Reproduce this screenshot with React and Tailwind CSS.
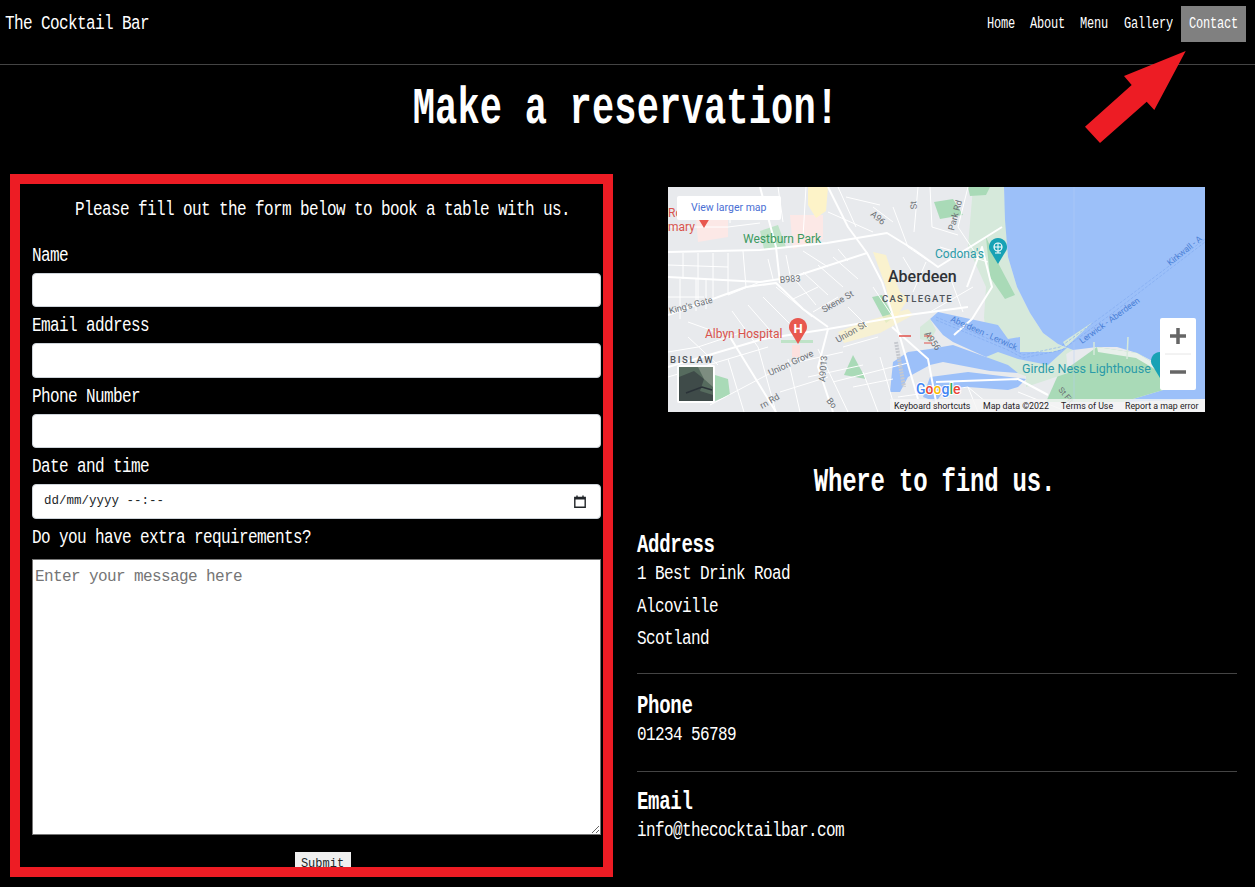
const minorRoads = [
  "M0 40L60 40L92 36", "M30 66L30 118", "M45 66L45 112", "M60 66L60 108", "M75 64L78 100", "M15 66L15 92",
  "M12 92L12 132", "M28 92L28 124", "M38 92L38 122", "M0 110L36 110", "M60 108L92 95", "M64 124L90 160", "M80 118L108 150",
  "M95 110L130 145", "M108 100L144 130", "M125 90L148 118", "M135 85L160 108", "M150 78L175 100", "M165 70L190 92",
  "M0 165L30 160L75 145", "M0 190L60 172L100 160", "M60 172L76 225", "M42 218L95 190L135 170", "M90 160L108 225", "M120 172L132 225",
  "M150 162L180 225", "M175 160L210 150", "M165 195L240 176", "M195 185L210 225", "M212 170L228 225", "M180 120L200 140",
  "M205 100L225 130", "M225 20L240 60L262 75", "M250 0L246 45", "M262 0L264 40L290 48", "M300 0L290 40L310 70", "M272 60L320 75",
  "M258 75L245 105", "M282 90L295 125", "M262 125L305 100", "M110 0L115 35", "M138 0L135 50", "M170 0L188 40", "M178 10L212 18",
  "M160 25L205 45", "M100 72L105 92", "M135 64L160 80", "M170 62L180 74", "M230 210L300 200L330 225", "M300 200L310 225", "M350 205L400 225",
  "M0 78L60 80", "M62 10L62 36", "M20 135L62 150", "M20 150L50 178", "M130 175L175 165", "M140 190L195 178", "M112 205L160 190",
  "M185 200L225 192", "M235 70L250 95", "M262 92L282 90", "M205 20L225 35", "M118 68L122 88", "M150 100L125 112", "M170 110L145 125",
];
const majorRoads = [
  "M0 65L92 63L159 56L219 46L245 62", "M0 90L92 95L125 90L199 66L214 95", "M0 128L78 100L108 96L135 122L160 140", "M0 180L95 152L160 142L240 128L300 120",
  "M62 150L108 225", "M160 142L150 180L165 225", "M199 66L180 40L160 0", "M214 95L232 150L250 212", "M224 140L260 172L270 225", "M245 62L270 80L334 40",
  "M299 100L314 60L324 100L304 132L286 148", "M92 0L108 60L112 96", "M268 195L350 192L380 208",
];

function Pin({ x, y, color, children }) {
  return (
    <g>
      <path d={`M${x - 8.5} ${y + 3}A9 9 0 1 1 ${x + 8.5} ${y + 3}L${x} ${y + 17}Z`} fill={color} />
      {children}
    </g>
  )
}

function MapLabel({ x, y, r = 0, size = 9, fill = "#6b7075", spacing = 0, weight, children }) {
  return (
    <text x={x} y={y} transform={r ? `rotate(${r} ${x} ${y})` : undefined} fontSize={size} fill={fill} letterSpacing={spacing} fontWeight={weight}>
      {children}
    </text>
  )
}

function MapDrawing() {
  return (
    <svg viewBox="0 0 537 225" className="block w-[537px] h-[225px] tracking-normal" fontFamily="Roboto, sans-serif">
      <rect width="537" height="225" fill="#e8eaed" />
      <path d="M28 30L60 28L60 50L30 55Z" fill="#fce8e6" />
      <path d="M122 28L155 28L155 52L125 62Z" fill="#fce8e6" />
      <path d="M140 0L160 0L158 24L148 31L140 18Z" fill="#fdf3c8" />
      <path d="M92 44L110 38L118 60L96 62Z" fill="#bfe3c8" />
      <path d="M113 153L145 153L145 156L113 156Z" fill="#bfe3c8" />
      <path d="M124 158L132 158L132 170L124 170Z" fill="#fce0de" />
      <path d="M185 168L198 192L176 188Z" fill="#a9dab7" />
      <path d="M47 188L60 192L62 208L47 214Z" fill="#a9dab7" />
      <path d="M204 110L214 108L226 130L218 136Z" fill="#a9dab7" />
      <path d="M205 65L218 68L222 80L232 105L240 112L225 135L218 100Z" fill="#fdf3c8" opacity="0.85" />
      <path d="M170 145L192 136L240 122L245 128L212 146L176 156Z" fill="#fdf3c8" opacity="0.7" />
      <path d="M305 0L336 0L340 70L349 100L362 126L375 146L390 157L405 163L360 190L320 175L316 130L318 100L300 60Z" fill="#d6e9db" />
      <path d="M318 50L328 72L347 108L337 112L322 90Z" fill="#a9dab7" />
      <path d="M266 15L285 12L295 28L272 32Z" fill="#a9dab7" />
      <path d="M300 0L322 0L318 8L302 9Z" fill="#a9dab7" />
      <path d="M336 0L537 0L537 212L455 215L495 203L492 178L469 166L449 160L429 160L405 163L390 157L375 146L362 126L349 100L340 70L337 33Z" fill="#9cc0f9" />
      <path d="M378 215L390 188L429 160L469 166L492 180L495 203L455 215Z" fill="#a9dab7" />
      <path d="M429 160L469 166L492 180L490 184L468 171L430 165Z" fill="#e8f0ea" />
      <path d="M398 165L358 188L358 200L400 186Z" fill="#d6e9db" />
      <path d="M262 132L270 125L330 138L340 152L352 150L352 165L385 165L400 160L380 178L350 172L330 165L318 170L285 155L275 148Z" fill="#9cc0f9" />
      <path d="M262 162L285 158L340 178L350 186L322 184L275 175L262 178Z" fill="#9cc0f9" />
      <path d="M262 190L300 185L358 192L350 200L340 203L300 200L275 205L268 215L255 210Z" fill="#9cc0f9" />
      <path d="M225 175L240 165L262 162L262 178L240 190L232 205L222 205Z" fill="#9cc0f9" />
      <path d="M252 140L262 132L268 143L262 155L252 152Z" fill="#d6e9db" />
      <path d="M395 155L425 135L398 160Z" fill="#d6e9db" />
      <path d="M460 150L459 172" stroke="#d6e9db" strokeWidth="1.5" />
      <path d="M426 155L426 168" stroke="#d6e9db" strokeWidth="1.5" />
      <path d="M406 0L406 225" stroke="#b4cdf5" strokeWidth="0.5" />
      <g stroke="#ffffff" fill="none" strokeLinejoin="round">
        <g strokeWidth="1">{minorRoads.map((d, i) => <path key={i} d={d} />)}</g>
        <g strokeWidth="2">{majorRoads.map((d, i) => <path key={i} d={d} />)}</g>
      </g>
      <path d="M228 155L236 200" stroke="#c6c9cf" strokeWidth="4" strokeDasharray="2 1" />
      <g stroke="#7ea7ee" strokeWidth="0.6" strokeDasharray="3 1.5" fill="none">
        <path d="M268 130L340 160L355 168L392 160L440 125L537 52" />
        <path d="M268 133L340 163L355 171L394 163L442 128L537 55" />
      </g>

      <MapLabel x={0} y={30} size={12} fill="#d9534c">Ro</MapLabel>
      <MapLabel x={0} y={44} size={12} fill="#d9534c">mary</MapLabel>
      <Pin x={36} y={24} color="#e8574f" />
      <MapLabel x={75} y={56} size={12} fill="#3c9a5f">Westburn Park</MapLabel>
      <MapLabel x={220} y={95} size={16} fill="#2f3237" weight="500">Aberdeen</MapLabel>
      <MapLabel x={214} y={115} size={9.5} fill="#50555b" spacing="1.3" weight="500">CASTLEGATE</MapLabel>
      <MapLabel x={2} y={176} size={9.5} fill="#50555b" spacing="1.7" weight="500">BISLAW</MapLabel>
      <MapLabel x={37} y={151} size={12} fill="#d9534c">Albyn Hospital</MapLabel>
      <Pin x={130} y={140} color="#e8574f">
        <text x={130} y={146} fontSize={13} fontWeight="700" fill="#ffffff" textAnchor="middle">H</text>
      </Pin>
      <MapLabel x={202} y={28} r={40}>A96</MapLabel>
      <MapLabel x={112} y={96} r={-5}>B983</MapLabel>
      <MapLabel x={2} y={127} r={-15}>King's Gate</MapLabel>
      <MapLabel x={156} y={126} r={-30}>Skene St</MapLabel>
      <MapLabel x={170} y={156} r={-30}>Union St</MapLabel>
      <MapLabel x={102} y={189} r={-25}>Union Grove</MapLabel>
      <MapLabel x={157} y={195} r={-85}>A9013</MapLabel>
      <MapLabel x={256} y={147} r={55}>A956</MapLabel>
      <MapLabel x={286} y={44} r={-75}>Park Rd</MapLabel>
      <MapLabel x={249} y={22} r={-95}>St</MapLabel>
      <MapLabel x={94} y={222} r={-30}>rn Rd</MapLabel>
      <MapLabel x={158} y={214} r={50}>Bo</MapLabel>
      <MapLabel x={390} y={203} r={50} size={8}>St Fit</MapLabel>
      <MapLabel x={267} y={71} size={12} fill="#2b9aa8">Codona's</MapLabel>
      <Pin x={330} y={60} color="#17a2b5">
        <circle cx={330} cy={60} r={4} fill="none" stroke="#ffffff" strokeWidth="1.2" />
        <path d="M330 56V66M326 60H334M327 66H333" stroke="#ffffff" strokeWidth="1" />
      </Pin>
      <MapLabel x={354} y={186} size={12.5} fill="#2b9aa8">Girdle Ness Lighthouse</MapLabel>
      <Pin x={492} y={174} color="#17a2b5" />
      <MapLabel x={282} y={134} r={24} size={8.5} fill="#4a7fd6">Aberdeen - Lerwick</MapLabel>
      <MapLabel x={414} y={157} r={-36} size={8.5} fill="#4a7fd6">Lerwick - Aberdeen</MapLabel>
      <MapLabel x={502} y={79} r={-39} size={8.5} fill="#4a7fd6">Kirkwall - A</MapLabel>
      <path d="M256 156L264 156M256 149L264 149" stroke="#e0504a" strokeWidth="1" />
      <path d="M231 149H243" stroke="#e0504a" strokeWidth="1.5" />

      <rect x="9" y="9" width="104" height="24" rx="2" fill="#ffffff" />
      <text x="23" y="24" fontSize="10.5" fill="#4a6fd4">View larger map</text>

      <rect x="9" y="178" width="38" height="38" rx="2" fill="#ffffff" />
      <rect x="11" y="180" width="34" height="34" fill="#566b5e" />
      <path d="M11 190L26 184L36 192L32 204L45 208L45 214L11 214Z" fill="#3f4b49" />
      <path d="M30 180L45 180L45 200L36 192Z" fill="#7d8d80" />
      <path d="M18 206L34 200L44 203" stroke="#2a3238" strokeWidth="1.5" fill="none" />

      <rect x="222" y="212" width="315" height="13" fill="#f5f5f5" opacity="0.8" />
      <text x="226" y="222" fontSize="8.8" fill="#1f2124">Keyboard shortcuts</text>
      <text x="315" y="222" fontSize="8.8" fill="#1f2124">Map data ©2022</text>
      <text x="393" y="222" fontSize="8.8" fill="#1f2124">Terms of Use</text>
      <text x="457" y="222" fontSize="8.8" fill="#1f2124">Report a map error</text>

      <text x="248" y="207" fontSize="14" fontWeight="500" stroke="#ffffff" strokeWidth="2" paintOrder="stroke">
        <tspan fill="#4285f4">G</tspan><tspan fill="#ea4335">o</tspan><tspan fill="#fbbc05">o</tspan><tspan fill="#4285f4">g</tspan><tspan fill="#34a853">l</tspan><tspan fill="#ea4335">e</tspan>
      </text>

      <rect x="492" y="131" width="36" height="72" rx="2" fill="#ffffff" />
      <path d="M497 167H523" stroke="#e6e6e6" strokeWidth="1" />
      <path d="M510 141V157M502 149H518" stroke="#666666" strokeWidth="3.5" />
      <path d="M502 185H518" stroke="#666666" strokeWidth="3.5" />
    </svg>
  )
}

const fieldClass = "block w-full h-[34.4px] bg-white text-[#212529] rounded-[4px] border border-[#ced4da] px-3"
const labelClass = "block leading-[39px] h-[36px] scale-y-[1.25]"

function Field({ label, type }) {
  return (
    <div>
      <label className={labelClass}>{label}</label>
      <input type={type} className={fieldClass} />
    </div>
  )
}

function InfoBlock({ title, children }) {
  return (
    <div>
      <h3 className="font-bold text-[19px] tracking-[-0.3px] leading-[27px] h-[27px] translate-y-[2px] scale-y-[1.35]">{title}</h3>
      {children}
    </div>
  )
}

function Line({ children }) {
  return <p className="leading-[32.5px] translate-y-[1px] scale-y-[1.25]">{children}</p>
}

function NavItem({ className, children }) {
  return (
    <li className={`h-[36px] leading-[36px] ${className}`}>
      <span className="block scale-y-[1.3]">{children}</span>
    </li>
  )
}

export default function App() {
  return (
    <div className="relative w-[1255px] h-[887px] overflow-hidden bg-black text-white text-[16px] tracking-[-0.6px] font-['Liberation_Mono',monospace]">
      <nav className="flex items-center justify-between h-[65px] border-b border-[#444444] pl-[5px] pr-[9px] pb-[22px] pt-[6px]">
        <a className="text-[16px] scale-y-[1.25]">The Cocktail Bar</a>
        <ul className="flex items-center text-[12px] tracking-[-0.2px]">
          <NavItem className="pl-2 pr-[7px]">Home</NavItem>
          <NavItem className="pl-2 pr-[7px]">About</NavItem>
          <NavItem className="pl-2 pr-[8px]">Menu</NavItem>
          <NavItem className="pl-2 pr-[8px]">Gallery</NavItem>
          <NavItem className="px-2 bg-[#808080]">Contact</NavItem>
        </ul>
      </nav>

      <h1 className="text-center font-bold text-[37px] tracking-[0.2px] leading-[86px] h-[108px] pr-[4px] scale-y-[1.4] origin-[50%_40px]">Make a reservation!</h1>

      <main className="flex">
        <section className="w-[627px] pl-8 pr-[26px]">
          <p className="text-center leading-[26px] pl-[12px] mt-[24px] mb-[16px] h-[24px] scale-y-[1.25]">Please fill out the form below to book a table with us.</p>
          <form>
            <Field label="Name" />
            <Field label="Email address" type="email" />
            <Field label="Phone Number" type="tel" />
            <div>
              <label className={labelClass}>Date and time</label>
              <div className={`${fieldClass} flex items-center justify-between text-[12.5px] tracking-[0px] pl-[11px] pr-[14px]`}>
                <span>dd/mm/yyyy --:--</span>
                <svg width="12" height="13" viewBox="0 0 12 13" className="shrink-0">
                  <path d="M0.8 2.5H11.2V12.2H0.8Z" fill="none" stroke="#212529" strokeWidth="1.4" />
                  <path d="M0.8 2H11.2V4.5H0.8Z" fill="#212529" />
                  <path d="M3 0.5V2M9 0.5V2" stroke="#212529" strokeWidth="1.4" />
                </svg>
              </div>
            </div>
            <label className={labelClass}>Do you have extra requirements?</label>
            <textarea
              placeholder="Enter your message here"
              className="block w-full h-[276px] mt-[4px] bg-white text-[#212529] border border-[#767676] px-[2px] py-[5px] placeholder:text-[#757575]"
            />
            <div className="flex justify-center mt-[17px] pl-[12px]">
              <button type="button" className="w-[56px] h-[24px] bg-[#efefef] text-[#212529] text-[12px] tracking-[0px]">Submit</button>
            </div>
          </form>
        </section>

        <section className="flex-1 pl-[10px] pr-[18px]">
          <div className="ml-[31px] mt-[14px]">
            <MapDrawing />
          </div>
          <h2 className="text-center font-bold text-[24px] tracking-[-0.2px] leading-[36px] mt-[53px] pr-[5px] scale-y-[1.35]">Where to find us.</h2>
          <div className="mt-[29px]">
            <InfoBlock title="Address">
              <Line>1 Best Drink Road</Line>
              <Line>Alcoville</Line>
              <Line>Scotland</Line>
            </InfoBlock>
            <hr className="border-[#444444] mt-[18px] mb-[17px]" />
            <InfoBlock title="Phone">
              <Line>01234 56789</Line>
            </InfoBlock>
            <hr className="border-[#444444] mt-[21px] mb-[15px]" />
            <InfoBlock title="Email">
              <Line>info@thecocktailbar.com</Line>
            </InfoBlock>
          </div>
        </section>
      </main>

      {/* red annotations drawn over the page */}
      <div className="absolute left-[10px] top-[174px] w-[603px] h-[703px] border-[10px] border-[#ed1c24]" />
      <svg className="absolute left-0 top-0 pointer-events-none" width="1255" height="160">
        <polygon points="1185.7,51 1124,76 1131.7,85 1085,126.7 1100,143 1146.7,101.7 1154.3,110" fill="#ed1c24" />
      </svg>
    </div>
  )
}
